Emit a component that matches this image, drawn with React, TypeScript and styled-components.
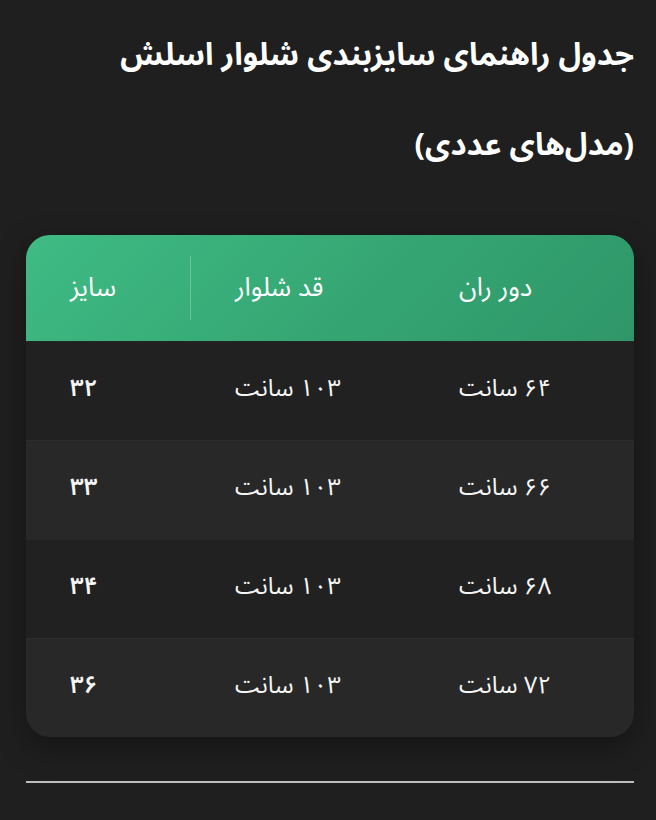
import React from 'react';
import styled, { createGlobalStyle } from 'styled-components';

const GlobalStyle = createGlobalStyle`
  html, body {
    margin: 0;
    padding: 0;
    background: #1f1f1f;
  }
  body {
    font-family: "Noto Sans Arabic", "DejaVu Sans", sans-serif;
    color: #ffffff;
  }
`;

const Page = styled.main`
  width: 656px;
  min-height: 820px;
  box-sizing: border-box;
  padding: 10px 22px 0 26px;
  background: #1f1f1f;
`;

const Heading = styled.h2`
  margin: 0;
  direction: rtl;
  text-align: right;
  font-size: 31px;
  font-weight: 700;
  line-height: 90px;
  color: #ffffff;
`;

const Card = styled.div`
  margin-top: 45px;
  width: 608px;
  border-radius: 24px;
  overflow: hidden;
  background: #212121;
  box-shadow: 0 10px 30px rgba(0, 0, 0, 0.35);
`;

const Row = styled.div<{ $alt?: boolean }>`
  display: grid;
  grid-template-columns: 165px 224px 1fr;
  height: 98px;
  align-items: center;
  background: ${p => (p.$alt ? '#282828' : '#212121')};
  border-top: 1px solid ${p => (p.$alt ? '#2d2d2d' : '#262626')};
`;

const HeaderRow = styled.div`
  display: grid;
  grid-template-columns: 165px 224px 1fr;
  height: 106px;
  align-items: center;
  background: linear-gradient(135deg, #3fbb84 0%, #35a673 55%, #2f9669 100%);
`;

const HeadCell = styled.div<{ $divider?: boolean }>`
  direction: rtl;
  text-align: left;
  padding-left: 44px;
  font-size: 26px;
  font-weight: 400;
  color: #ffffff;
  height: 64px;
  line-height: 64px;
  border-right: ${p => (p.$divider ? '1px solid rgba(255, 255, 255, 0.25)' : 'none')};
`;

const Cell = styled.div<{ $bold?: boolean }>`
  direction: rtl;
  text-align: left;
  padding-left: 44px;
  font-size: 24px;
  font-weight: ${p => (p.$bold ? 600 : 400)};
  color: #f5f5f5;
  margin-top: -6px;
`;

const Rule = styled.hr`
  margin: 44px 0 0 0;
  width: 608px;
  border: none;
  height: 2px;
  background: #bdbdbd;
`;

const rows = [
  { size: '۳۲', length: '۱۰۳ سانت', thigh: '۶۴ سانت' },
  { size: '۳۳', length: '۱۰۳ سانت', thigh: '۶۶ سانت' },
  { size: '۳۴', length: '۱۰۳ سانت', thigh: '۶۸ سانت' },
  { size: '۳۶', length: '۱۰۳ سانت', thigh: '۷۲ سانت' },
];

const App: React.FC = () => {
  return (
    <Page>
      <GlobalStyle />
      <Heading>
        جدول راهنمای سایزبندی شلوار اسلش
        <br />
        (مدل‌های عددی)
      </Heading>

      <Card>
        <HeaderRow>
          <HeadCell $divider>سایز</HeadCell>
          <HeadCell>قد شلوار</HeadCell>
          <HeadCell>دور ران</HeadCell>
        </HeaderRow>
        {rows.map((r, i) => (
          <Row key={r.size} $alt={i % 2 === 1}>
            <Cell $bold>{r.size}</Cell>
            <Cell>{r.length}</Cell>
            <Cell>{r.thigh}</Cell>
          </Row>
        ))}
      </Card>

      <Rule />
    </Page>
  );
};

export default App;
